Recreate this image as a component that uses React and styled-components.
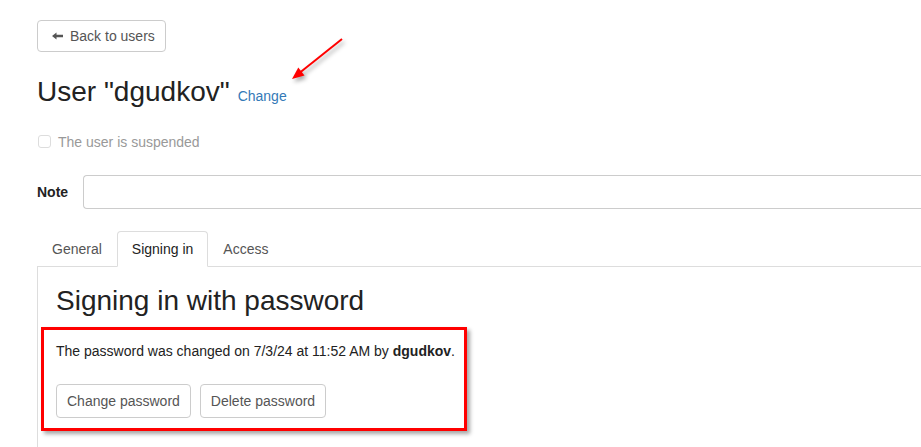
import styled, { createGlobalStyle } from "styled-components"

const GlobalStyle = createGlobalStyle`
  html, body {
    margin: 0;
    padding: 0;
    overflow: hidden;
    background: #fff;
  }
  body {
    font-family: "Liberation Sans", Arial, sans-serif;
    font-size: 14px;
    line-height: 20px;
    color: #333;
  }
  * {
    box-sizing: border-box;
  }
`

const Page = styled.div`
  position: relative;
  padding: 20px 0 0 37px;
`

const Button = styled.button`
  display: inline-flex;
  align-items: center;
  gap: 7px;
  height: ${({ $h }) => $h || 34}px;
  padding: 0 ${({ $pr }) => $pr || 10}px 0 ${({ $pl }) => $pl || 10}px;
  border: 1px solid #ccc;
  border-radius: 4px;
  background: #fff;
  color: #555;
  font-family: inherit;
  font-size: 14px;
  line-height: 20px;
  cursor: pointer;
`

const TitleRow = styled.div`
  display: flex;
  align-items: baseline;
  gap: 8px;
  margin-top: 25px;
`

const Title = styled.h1`
  margin: 0;
  font-size: 28px;
  line-height: 1.1;
  font-weight: normal;
  color: #222;
`

const Link = styled.a`
  color: #337ab7;
  text-decoration: none;
  font-size: 14px;
`

const CheckRow = styled.label`
  display: flex;
  align-items: center;
  gap: 7px;
  margin-top: 24px;
  color: #999;
`

const Checkbox = styled.span`
  width: 13px;
  height: 13px;
  margin-left: 1px;
  border: 1px solid #ddd;
  border-radius: 3px;
  background: #fff;
`

const NoteRow = styled.div`
  display: flex;
  align-items: center;
  gap: 15px;
  margin-top: 23px;
`

const NoteLabel = styled.span`
  font-weight: bold;
  color: #222;
`

const NoteInput = styled.input`
  flex: 1;
  height: 34px;
  border: 1px solid #ccc;
  border-right: none;
  border-radius: 4px 0 0 4px;
  padding: 6px 12px;
  font-family: inherit;
  font-size: 14px;
`

const Tabs = styled.div`
  display: flex;
  margin-top: 22px;
  border-bottom: 1px solid #ddd;
`

const Tab = styled.div`
  padding: 7px 14px;
  margin-bottom: -1px;
  border: 1px solid transparent;
  border-radius: 4px 4px 0 0;
  color: ${({ $active }) => ($active ? "#222" : "#555")};
  ${({ $active }) =>
    $active && "background: #fff; border-color: #ddd #ddd transparent;"}
`

const Pane = styled.div`
  border-left: 1px solid #ddd;
  padding: 19px 18px 40px;
`

const PaneTitle = styled.h2`
  margin: 0;
  font-size: 28px;
  line-height: 1.1;
  font-weight: normal;
  color: #222;
`

const Info = styled.p`
  margin: 24px 0 23px;
  color: #222;
`

const ButtonRow = styled.div`
  display: flex;
  gap: 9px;
`

const Highlight = styled.div`
  position: absolute;
  left: 41px;
  top: 327px;
  width: 426px;
  height: 104px;
  border: 3px solid #f00;
  box-shadow: 3px 3px 4px rgba(0, 0, 0, 0.35);
  pointer-events: none;
`

const Pointer = styled.svg`
  position: absolute;
  left: 285px;
  top: 35px;
  overflow: visible;
  filter: drop-shadow(2px 3px 2px rgba(0, 0, 0, 0.35));
`

const BackIcon = () => (
  <svg width="11" height="8" viewBox="0 0 11 8">
    <path d="M0 4 L4.5 0.5 V2.8 H11 V5.2 H4.5 V7.5 Z" fill="#555" />
  </svg>
)

const App = () => {
  return (
    <Page>
      <GlobalStyle />
      <Button $h={32} $pl={14} $pr={10}>
        <BackIcon />
        Back to users
      </Button>

      <TitleRow>
        <Title>User "dgudkov"</Title>
        <Link href="#">Change</Link>
      </TitleRow>

      <CheckRow>
        <Checkbox />
        The user is suspended
      </CheckRow>

      <NoteRow>
        <NoteLabel>Note</NoteLabel>
        <NoteInput />
      </NoteRow>

      <Tabs>
        <Tab>General</Tab>
        <Tab $active>Signing in</Tab>
        <Tab>Access</Tab>
      </Tabs>

      <Pane>
        <PaneTitle>Signing in with password</PaneTitle>
        <Info>
          The password was changed on 7/3/24 at 11:52 AM by <b>dgudkov</b>.
        </Info>
        <ButtonRow>
          <Button>Change password</Button>
          <Button>Delete password</Button>
        </ButtonRow>
      </Pane>

      <Highlight />
      <Pointer width="65" height="50" viewBox="0 0 65 50">
        <line x1="57" y1="4" x2="15" y2="37.5" stroke="#f00" strokeWidth="2" />
        <polygon points="7,44 19.5,40.4 13.3,32.6" fill="#f00" />
      </Pointer>
    </Page>
  )
}

export default App
